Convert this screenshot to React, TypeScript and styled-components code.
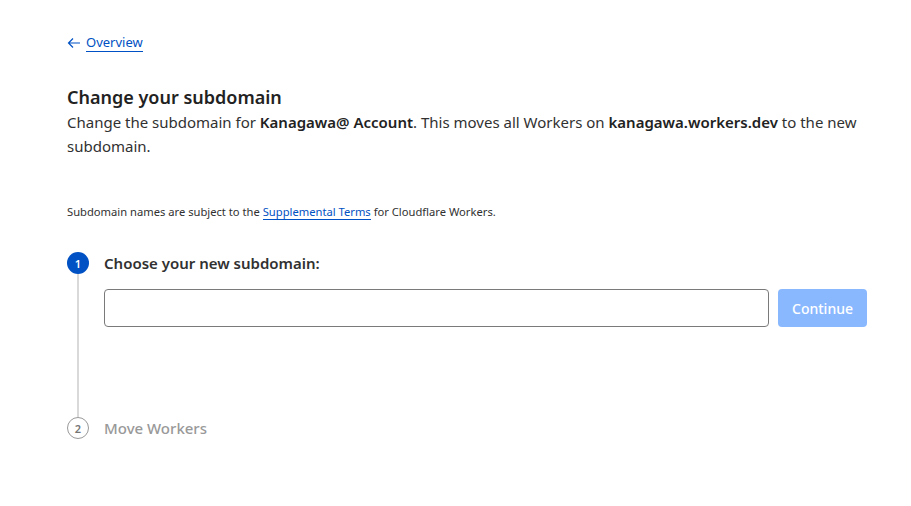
import React from 'react'
import styled, { createGlobalStyle } from 'styled-components'

const GlobalStyle = createGlobalStyle`
	body {
		margin: 0;
		background: #ffffff;
		font-family: 'Noto Sans', 'Open Sans', sans-serif;
		color: #313131;
	}
`

const Page = styled.div`
	padding: 33px 44px 0 67px;
`

const BackLink = styled.a`
	display: inline-flex;
	align-items: center;
	gap: 5px;
	color: #0051c3;
	font-size: 13px;
	line-height: 20px;
	text-decoration: none;
	cursor: pointer;

	> span {
		border-bottom: 1px solid #0051c3;
		line-height: 17px;
	}
`

const Title = styled.h1`
	margin: 29px 0 0;
	font-size: 18px;
	font-weight: 600;
	line-height: 26px;
	color: #222;
`

const Lead = styled.p`
	margin: 0;
	font-size: 15px;
	line-height: 24px;
	color: #313131;

	> b {
		font-weight: 600;
		color: #222;
	}
`

const Terms = styled.p`
	margin: 46px 0 0;
	font-size: 11.2px;
	line-height: 16px;
	color: #313131;

	> a {
		color: #0051c3;
		text-decoration: none;
		border-bottom: 1px solid #0051c3;
	}
`

const Steps = styled.div`
	margin-top: 32px;
	display: flex;
	flex-direction: column;
`

const Step = styled.div`
	display: grid;
	grid-template-columns: 22px 1fr;
	column-gap: 15px;
`

const Rail = styled.div`
	display: flex;
	flex-direction: column;
	align-items: center;
`

const Bullet = styled.div<{ $active?: boolean }>`
	width: 22px;
	height: 22px;
	box-sizing: border-box;
	border-radius: 50%;
	display: flex;
	align-items: center;
	justify-content: center;
	font-size: 11px;
	font-weight: 600;
	background: ${p => (p.$active ? '#0051c3' : '#fff')};
	color: ${p => (p.$active ? '#fff' : '#757575')};
	border: ${p => (p.$active ? 'none' : '1px solid #999')};
	flex-shrink: 0;
`

const Line = styled.div`
	width: 2px;
	flex: 1;
	background: #d9d9d9;
`

const StepBody = styled.div<{ $tall?: boolean }>`
	padding-bottom: ${p => (p.$tall ? '90px' : '0')};
`

const StepLabel = styled.div<{ $muted?: boolean }>`
	font-size: 15px;
	font-weight: ${p => (p.$muted ? 500 : 600)};
	line-height: 22px;
	color: ${p => (p.$muted ? '#999' : '#313131')};
`

const Row = styled.div`
	margin-top: 15px;
	display: flex;
	gap: 9px;
`

const Input = styled.input`
	flex: 1;
	height: 38px;
	box-sizing: border-box;
	border: 1px solid #7a7a7a;
	border-radius: 4px;
	padding: 0 10px;
	font: inherit;
`

const ContinueButton = styled.button`
	width: 89px;
	height: 38px;
	border: none;
	border-radius: 4px;
	background: #8ab8ff;
	color: #fff;
	font-family: inherit;
	font-size: 14px;
	font-weight: 500;
	cursor: not-allowed;
`

const App = () => (
	<>
		<GlobalStyle />
		<Page>
			<BackLink>
				<svg width="14" height="14" viewBox="0 0 14 14" fill="none" stroke="#0051c3" strokeWidth="1.2">
					<path d="M13 7H1.5M6 2.5L1.5 7L6 11.5" />
				</svg>
				<span>Overview</span>
			</BackLink>
			<Title>Change your subdomain</Title>
			<Lead>
				Change the subdomain for <b>Kanagawa@ Account</b>. This moves all Workers on <b>kanagawa.workers.dev</b> to
				the new subdomain.
			</Lead>
			<Terms>
				Subdomain names are subject to the <a>Supplemental Terms</a> for Cloudflare Workers.
			</Terms>
			<Steps>
				<Step>
					<Rail>
						<Bullet $active>1</Bullet>
						<Line />
					</Rail>
					<StepBody $tall>
						<StepLabel>Choose your new subdomain:</StepLabel>
						<Row>
							<Input aria-label="subdomain" />
							<ContinueButton disabled>Continue</ContinueButton>
						</Row>
					</StepBody>
				</Step>
				<Step>
					<Rail>
						<Bullet>2</Bullet>
					</Rail>
					<StepBody>
						<StepLabel $muted>Move Workers</StepLabel>
					</StepBody>
				</Step>
			</Steps>
		</Page>
	</>
)

export default App
